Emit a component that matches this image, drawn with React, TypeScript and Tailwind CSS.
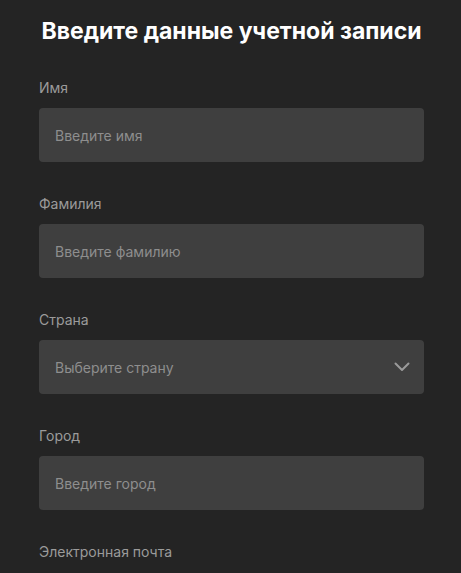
import React from "react";

const fields = [
  { label: "Имя", placeholder: "Введите имя" },
  { label: "Фамилия", placeholder: "Введите фамилию" },
  { label: "Страна", placeholder: "Выберите страну", select: true },
  { label: "Город", placeholder: "Введите город" },
];

export default function App() {
  return (
    <div
      className="h-[573px] w-full overflow-hidden bg-[#242424] pl-[39px] pr-[37px] pt-[16px]"
      style={{ fontFamily: "Inter, 'Noto Sans', sans-serif" }}
    >
      <h1 className="text-center text-[23px] leading-[30px] font-bold text-white">
        Введите данные учетной записи
      </h1>
      <div className="mt-[32px] flex flex-col gap-[32px]">
        {fields.map((f) => (
          <div key={f.label} className="flex flex-col">
            <div className="text-[14px] leading-[20px] text-[#9b9b9b]">{f.label}</div>
            <div className="mt-[10px] flex h-[54px] items-center justify-between rounded-[4px] bg-[#3f3f3f] pl-[16px] pr-[14px]">
              <span className="text-[14px] text-[#8e8e8e]">{f.placeholder}</span>
              {f.select && (
                <svg width="16" height="10" viewBox="0 0 16 10" fill="none">
                  <path d="M1.5 1.5 L8 8 L14.5 1.5" stroke="#9a9a9a" strokeWidth="2" strokeLinecap="round" strokeLinejoin="round" />
                </svg>
              )}
            </div>
          </div>
        ))}
        <div className="text-[14px] leading-[20px] text-[#9b9b9b]">Электронная почта</div>
      </div>
    </div>
  );
}
